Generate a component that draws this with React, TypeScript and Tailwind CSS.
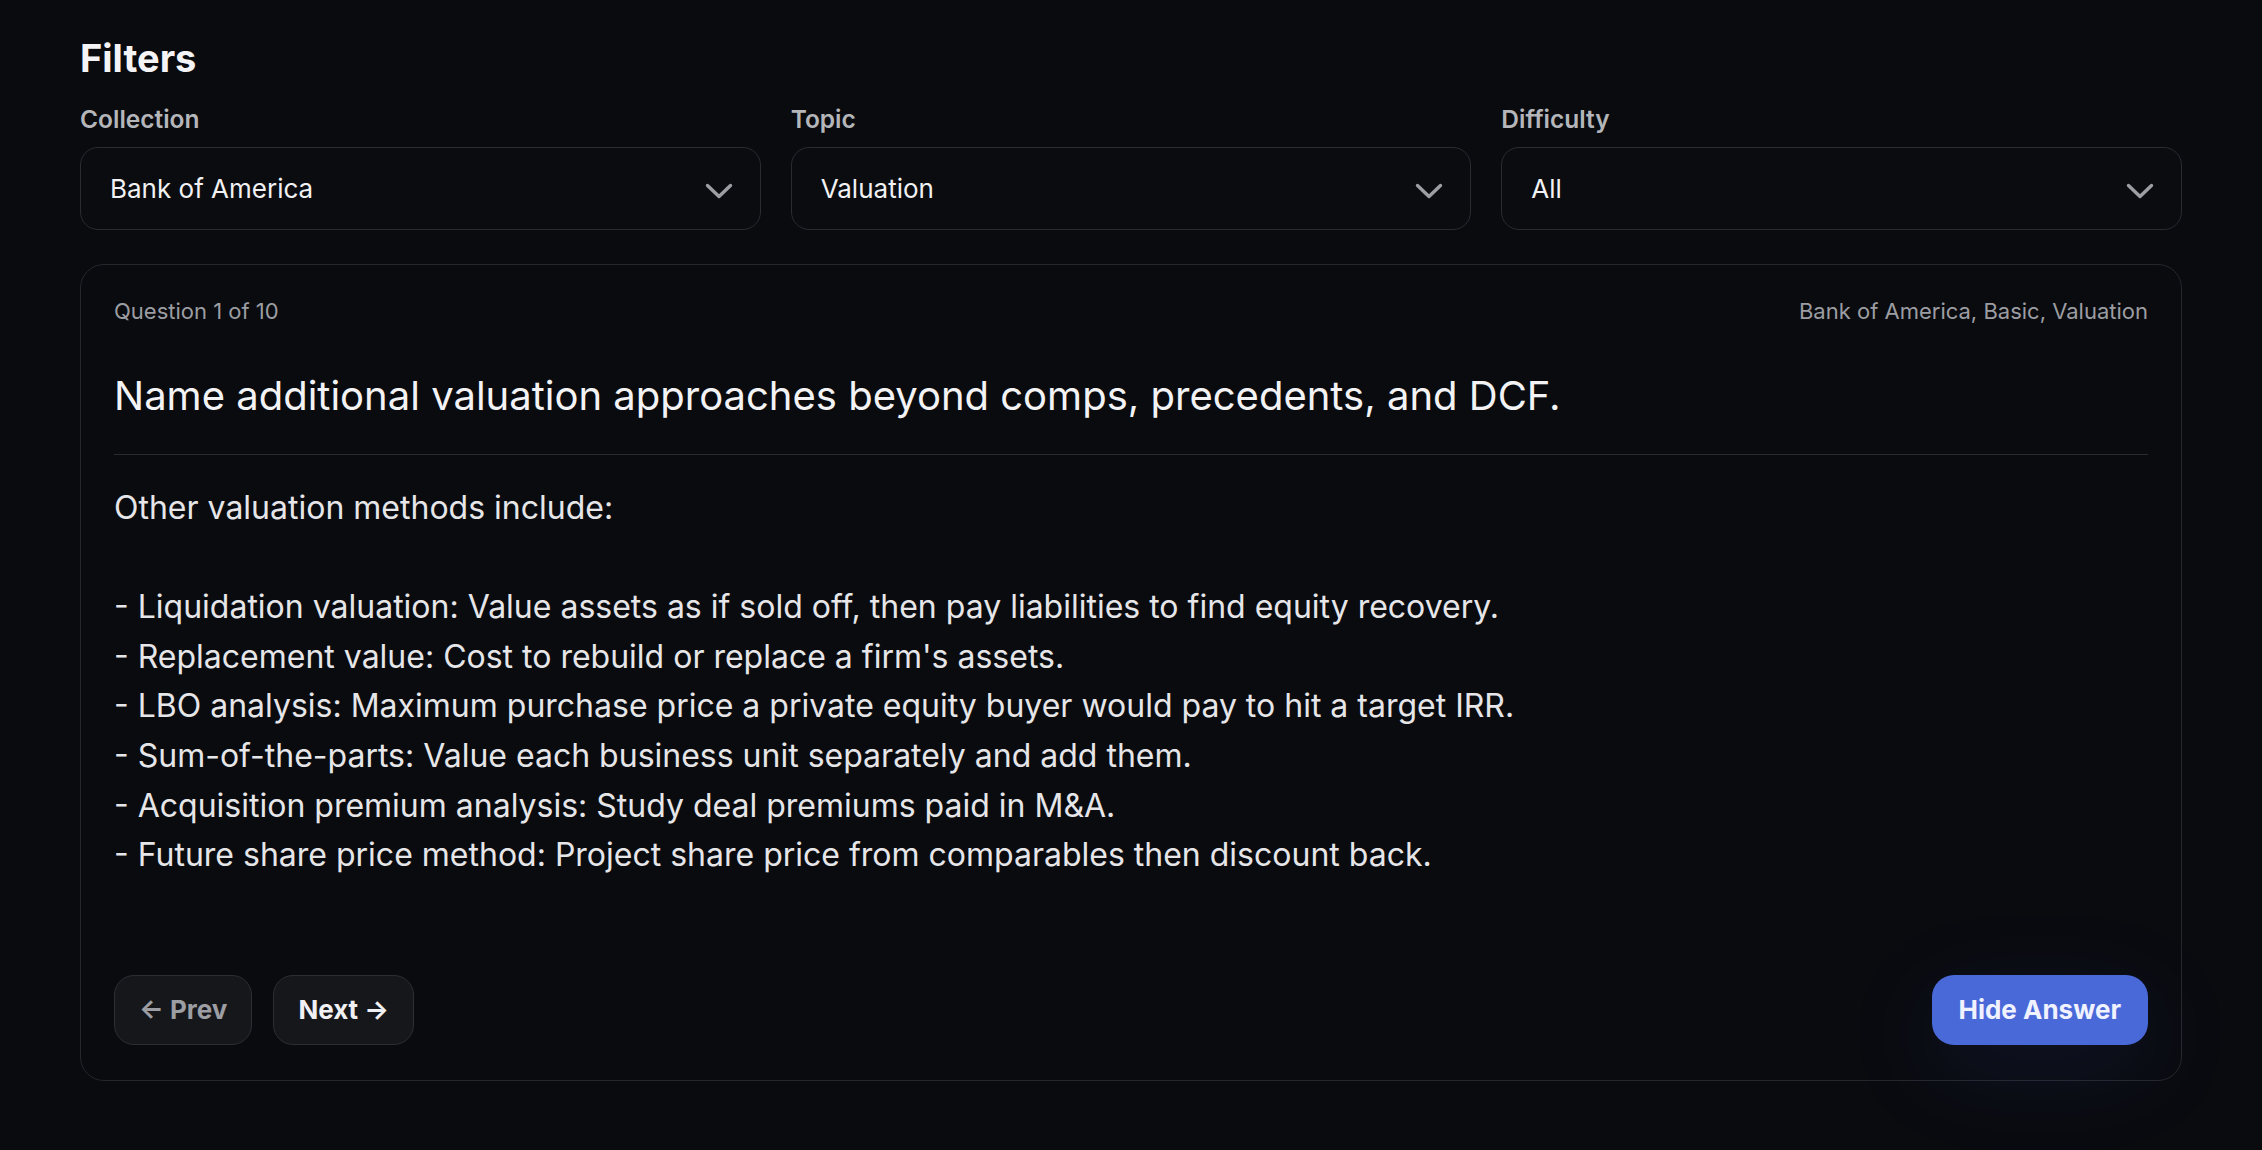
import React from "react";

function Chevron() {
  return (
    <svg width="28" height="16" viewBox="0 0 28 16" fill="none" stroke="#9d9ea3" strokeWidth="3.4" strokeLinecap="round" strokeLinejoin="round">
      <path d="M2.5 2.5L14 13.5L25.5 2.5" />
    </svg>
  );
}

function Select({ label, value }: { label: string; value: string }) {
  return (
    <div className="flex flex-col">
      <div className="text-[24.5px] leading-[30px] font-semibold text-[#b5b6ba]">{label}</div>
      <div className="mt-[13px] h-[83px] rounded-[18px] border border-[#2b2c32] bg-[#0b0c10] flex items-center justify-between pl-[29px] pr-[27px]">
        <span className="text-[26px] text-[#f1f1f3]">{value}</span>
        <div className="pt-[5px]">
          <Chevron />
        </div>
      </div>
    </div>
  );
}

const answer = `Other valuation methods include:

- Liquidation valuation: Value assets as if sold off, then pay liabilities to find equity recovery.
- Replacement value: Cost to rebuild or replace a firm's assets.
- LBO analysis: Maximum purchase price a private equity buyer would pay to hit a target IRR.
- Sum-of-the-parts: Value each business unit separately and add them.
- Acquisition premium analysis: Study deal premiums paid in M&A.
- Future share price method: Project share price from comparables then discount back.`;

export default function App() {
  return (
    <div
      className="min-h-[1150px] w-full bg-[#0a0b0f] px-[80px] pt-[34px] text-white"
      style={{ fontFamily: "Inter, 'Noto Sans', sans-serif" }}
    >
      <h1 className="text-[38px] leading-[48px] font-bold text-[#f4f4f6]">Filters</h1>
      <div className="mt-[22px] grid grid-cols-3 gap-[30px]">
        <Select label="Collection" value="Bank of America" />
        <Select label="Topic" value="Valuation" />
        <Select label="Difficulty" value="All" />
      </div>

      <div className="relative mt-[34px] rounded-[24px] border border-[#26272d] bg-[#0a0b0f] px-[33px] pt-[31px] pb-[35px]">
        <div className="flex items-center justify-between text-[22px] leading-[30px] text-[#9c9da2]">
          <span>Question 1 of 10</span>
          <span>Bank of America, Basic, Valuation</span>
        </div>
        <h2 className="mt-[46px] pb-[34px] border-b border-[#2a2b31] text-[40px] leading-[48px] font-normal text-[#f3f3f5]">
          Name additional valuation approaches beyond comps, precedents, and DCF.
        </h2>
        <div className="mt-[28px] whitespace-pre-wrap text-[32px] leading-[49.6px] text-[#e6e6e9]">
          {answer}
        </div>
        <div className="mt-[95px] flex items-center justify-between">
          <div className="flex items-center gap-[21px]">
            <button className="h-[70px] px-[24px] rounded-[20px] border border-[#2d2e34] bg-[#16171b] text-[26px] font-bold text-[#9d9ea3]">
              ← Prev
            </button>
            <button className="h-[70px] px-[24px] rounded-[20px] border border-[#2d2e34] bg-[#16171b] text-[26px] font-bold text-[#f1f1f3]">
              Next →
            </button>
          </div>
          <button className="h-[70px] px-[27px] rounded-[22px] bg-[#4a69d9] text-[26px] font-bold text-[#f0f2ff] shadow-[0_24px_90px_6px_rgba(60,90,220,0.11)]">
            Hide Answer
          </button>
        </div>
      </div>
    </div>
  );
}
